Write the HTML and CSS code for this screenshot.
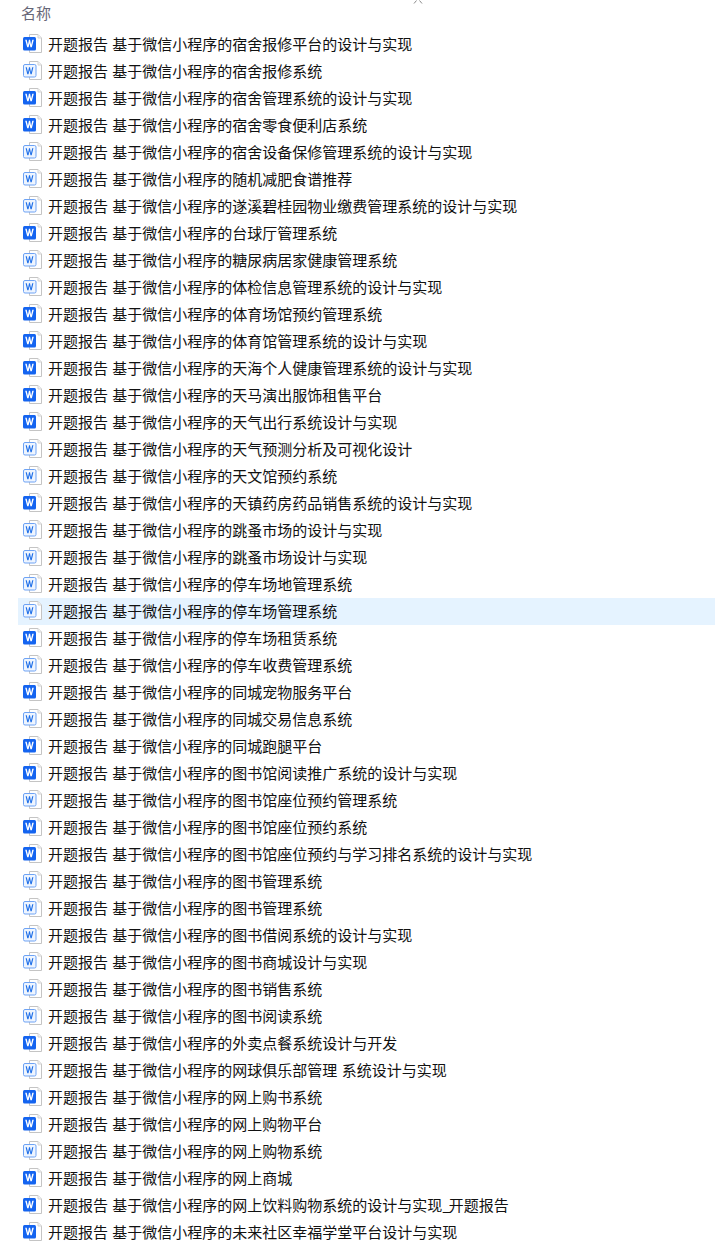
FILE: index.html
```html
<!DOCTYPE html>
<html lang="zh-CN">
<head>
<meta charset="utf-8">
<title>名称</title>
<link rel="stylesheet" href="styles.css">
</head>
<body>
<svg class="defs" width="0" height="0" aria-hidden="true">
  <symbol id="sheet" viewBox="0 0 20 20">
    <path d="M6.5 .5H15L18.5 4V18.5H6.5Z" fill="#fff" stroke="#c4c4c4"/>
    <path d="M15 .5V4H18.5" fill="#f2f2f2" stroke="#d4d4d4"/>
  </symbol>
  <symbol id="doc-solid" viewBox="0 0 20 20">
    <use href="#sheet"/>
    <rect x="0" y="3" width="13" height="13.5" rx="1.5" fill="#1464f0"/>
    <path d="M2.2 5.8 4.2 13.2H5.6L6.5 9.3 7.4 13.2H8.8L10.8 5.8H9.3L8.1 10.8 7.1 5.8H5.9L4.9 10.8 3.7 5.8Z" fill="#fff"/>
  </symbol>
  <symbol id="doc-light" viewBox="0 0 20 20">
    <use href="#sheet"/>
    <rect x=".5" y="3.5" width="12.5" height="12.5" rx="1.5" fill="#eef5ff" stroke="#6ea3f5"/>
    <path d="M2.6 6.3 4.3 13.2H5.5L6.5 9 7.5 13.2H8.7L10.4 6.3H9.2L8 11.2 7 6.3H6L5 11.2 3.8 6.3Z" fill="#1f6fe8"/>
  </symbol>
</svg>
<svg class="sort-mark" width="10" height="4" viewBox="0 0 10 4" aria-hidden="true"><path d="M1 3.5 3.5 .5M9 3.5 6.5 .5" fill="none" stroke="#8a8a8a"/></svg>
<main class="list">
  <div class="head">名称</div>
  <ul class="rows">
    <li class="row"><svg class="icon"><use href="#doc-solid"/></svg><span class="name">开题报告 基于微信小程序的宿舍报修平台的设计与实现</span></li>
    <li class="row"><svg class="icon"><use href="#doc-light"/></svg><span class="name">开题报告 基于微信小程序的宿舍报修系统</span></li>
    <li class="row"><svg class="icon"><use href="#doc-solid"/></svg><span class="name">开题报告 基于微信小程序的宿舍管理系统的设计与实现</span></li>
    <li class="row"><svg class="icon"><use href="#doc-solid"/></svg><span class="name">开题报告 基于微信小程序的宿舍零食便利店系统</span></li>
    <li class="row"><svg class="icon"><use href="#doc-light"/></svg><span class="name">开题报告 基于微信小程序的宿舍设备保修管理系统的设计与实现</span></li>
    <li class="row"><svg class="icon"><use href="#doc-light"/></svg><span class="name">开题报告 基于微信小程序的随机减肥食谱推荐</span></li>
    <li class="row"><svg class="icon"><use href="#doc-light"/></svg><span class="name">开题报告 基于微信小程序的遂溪碧桂园物业缴费管理系统的设计与实现</span></li>
    <li class="row"><svg class="icon"><use href="#doc-solid"/></svg><span class="name">开题报告 基于微信小程序的台球厅管理系统</span></li>
    <li class="row"><svg class="icon"><use href="#doc-light"/></svg><span class="name">开题报告 基于微信小程序的糖尿病居家健康管理系统</span></li>
    <li class="row"><svg class="icon"><use href="#doc-light"/></svg><span class="name">开题报告 基于微信小程序的体检信息管理系统的设计与实现</span></li>
    <li class="row"><svg class="icon"><use href="#doc-solid"/></svg><span class="name">开题报告 基于微信小程序的体育场馆预约管理系统</span></li>
    <li class="row"><svg class="icon"><use href="#doc-solid"/></svg><span class="name">开题报告 基于微信小程序的体育馆管理系统的设计与实现</span></li>
    <li class="row"><svg class="icon"><use href="#doc-solid"/></svg><span class="name">开题报告 基于微信小程序的天海个人健康管理系统的设计与实现</span></li>
    <li class="row"><svg class="icon"><use href="#doc-solid"/></svg><span class="name">开题报告 基于微信小程序的天马演出服饰租售平台</span></li>
    <li class="row"><svg class="icon"><use href="#doc-solid"/></svg><span class="name">开题报告 基于微信小程序的天气出行系统设计与实现</span></li>
    <li class="row"><svg class="icon"><use href="#doc-light"/></svg><span class="name">开题报告 基于微信小程序的天气预测分析及可视化设计</span></li>
    <li class="row"><svg class="icon"><use href="#doc-light"/></svg><span class="name">开题报告 基于微信小程序的天文馆预约系统</span></li>
    <li class="row"><svg class="icon"><use href="#doc-solid"/></svg><span class="name">开题报告 基于微信小程序的天镇药房药品销售系统的设计与实现</span></li>
    <li class="row"><svg class="icon"><use href="#doc-light"/></svg><span class="name">开题报告 基于微信小程序的跳蚤市场的设计与实现</span></li>
    <li class="row"><svg class="icon"><use href="#doc-light"/></svg><span class="name">开题报告 基于微信小程序的跳蚤市场设计与实现</span></li>
    <li class="row"><svg class="icon"><use href="#doc-light"/></svg><span class="name">开题报告 基于微信小程序的停车场地管理系统</span></li>
    <li class="row selected"><svg class="icon"><use href="#doc-light"/></svg><span class="name">开题报告 基于微信小程序的停车场管理系统</span></li>
    <li class="row"><svg class="icon"><use href="#doc-solid"/></svg><span class="name">开题报告 基于微信小程序的停车场租赁系统</span></li>
    <li class="row"><svg class="icon"><use href="#doc-light"/></svg><span class="name">开题报告 基于微信小程序的停车收费管理系统</span></li>
    <li class="row"><svg class="icon"><use href="#doc-solid"/></svg><span class="name">开题报告 基于微信小程序的同城宠物服务平台</span></li>
    <li class="row"><svg class="icon"><use href="#doc-light"/></svg><span class="name">开题报告 基于微信小程序的同城交易信息系统</span></li>
    <li class="row"><svg class="icon"><use href="#doc-solid"/></svg><span class="name">开题报告 基于微信小程序的同城跑腿平台</span></li>
    <li class="row"><svg class="icon"><use href="#doc-solid"/></svg><span class="name">开题报告 基于微信小程序的图书馆阅读推广系统的设计与实现</span></li>
    <li class="row"><svg class="icon"><use href="#doc-light"/></svg><span class="name">开题报告 基于微信小程序的图书馆座位预约管理系统</span></li>
    <li class="row"><svg class="icon"><use href="#doc-solid"/></svg><span class="name">开题报告 基于微信小程序的图书馆座位预约系统</span></li>
    <li class="row"><svg class="icon"><use href="#doc-solid"/></svg><span class="name">开题报告 基于微信小程序的图书馆座位预约与学习排名系统的设计与实现</span></li>
    <li class="row"><svg class="icon"><use href="#doc-light"/></svg><span class="name">开题报告 基于微信小程序的图书管理系统</span></li>
    <li class="row"><svg class="icon"><use href="#doc-light"/></svg><span class="name">开题报告 基于微信小程序的图书管理系统</span></li>
    <li class="row"><svg class="icon"><use href="#doc-light"/></svg><span class="name">开题报告 基于微信小程序的图书借阅系统的设计与实现</span></li>
    <li class="row"><svg class="icon"><use href="#doc-light"/></svg><span class="name">开题报告 基于微信小程序的图书商城设计与实现</span></li>
    <li class="row"><svg class="icon"><use href="#doc-light"/></svg><span class="name">开题报告 基于微信小程序的图书销售系统</span></li>
    <li class="row"><svg class="icon"><use href="#doc-light"/></svg><span class="name">开题报告 基于微信小程序的图书阅读系统</span></li>
    <li class="row"><svg class="icon"><use href="#doc-solid"/></svg><span class="name">开题报告 基于微信小程序的外卖点餐系统设计与开发</span></li>
    <li class="row"><svg class="icon"><use href="#doc-light"/></svg><span class="name">开题报告 基于微信小程序的网球俱乐部管理 系统设计与实现</span></li>
    <li class="row"><svg class="icon"><use href="#doc-solid"/></svg><span class="name">开题报告 基于微信小程序的网上购书系统</span></li>
    <li class="row"><svg class="icon"><use href="#doc-solid"/></svg><span class="name">开题报告 基于微信小程序的网上购物平台</span></li>
    <li class="row"><svg class="icon"><use href="#doc-light"/></svg><span class="name">开题报告 基于微信小程序的网上购物系统</span></li>
    <li class="row"><svg class="icon"><use href="#doc-solid"/></svg><span class="name">开题报告 基于微信小程序的网上商城</span></li>
    <li class="row"><svg class="icon"><use href="#doc-solid"/></svg><span class="name">开题报告 基于微信小程序的网上饮料购物系统的设计与实现<span class="underscore">_</span>开题报告</span></li>
    <li class="row"><svg class="icon"><use href="#doc-solid"/></svg><span class="name">开题报告 基于微信小程序的未来社区幸福学堂平台设计与实现</span></li>
  </ul>
</main>
</body>
</html>
```
FILE: styles.css
```css
html, body {
  margin: 0;
  padding: 0;
  height: 1245px;
  overflow: hidden;
  background: #fff;
}
body {
  position: relative;
  font-family: "Noto Sans CJK SC", "Noto Sans", sans-serif;
  font-size: 15px;
  color: #111;
}
.defs {
  position: absolute;
}
.sort-mark {
  position: absolute;
  left: 413px;
  top: 0;
}
.list {
  display: flex;
  flex-direction: column;
}
.head {
  height: 25px;
  line-height: 25px;
  padding: 0 0 0 21px;
  color: #667;
  margin-bottom: 6px;
}
.rows {
  list-style: none;
  margin: 0 0 0 18px;
  padding: 0;
}
.row {
  display: flex;
  align-items: center;
  height: 27px;
  padding-left: 5px;
  gap: 5px;
  white-space: pre;
  word-spacing: 1px;
}
.name {
  margin-bottom: 2px;
}
.underscore {
  letter-spacing: -2px;
}
.selected {
  background: #e5f3ff;
}
.icon {
  width: 20px;
  height: 20px;
  flex: none;
  margin-top: -1px;
}
```
